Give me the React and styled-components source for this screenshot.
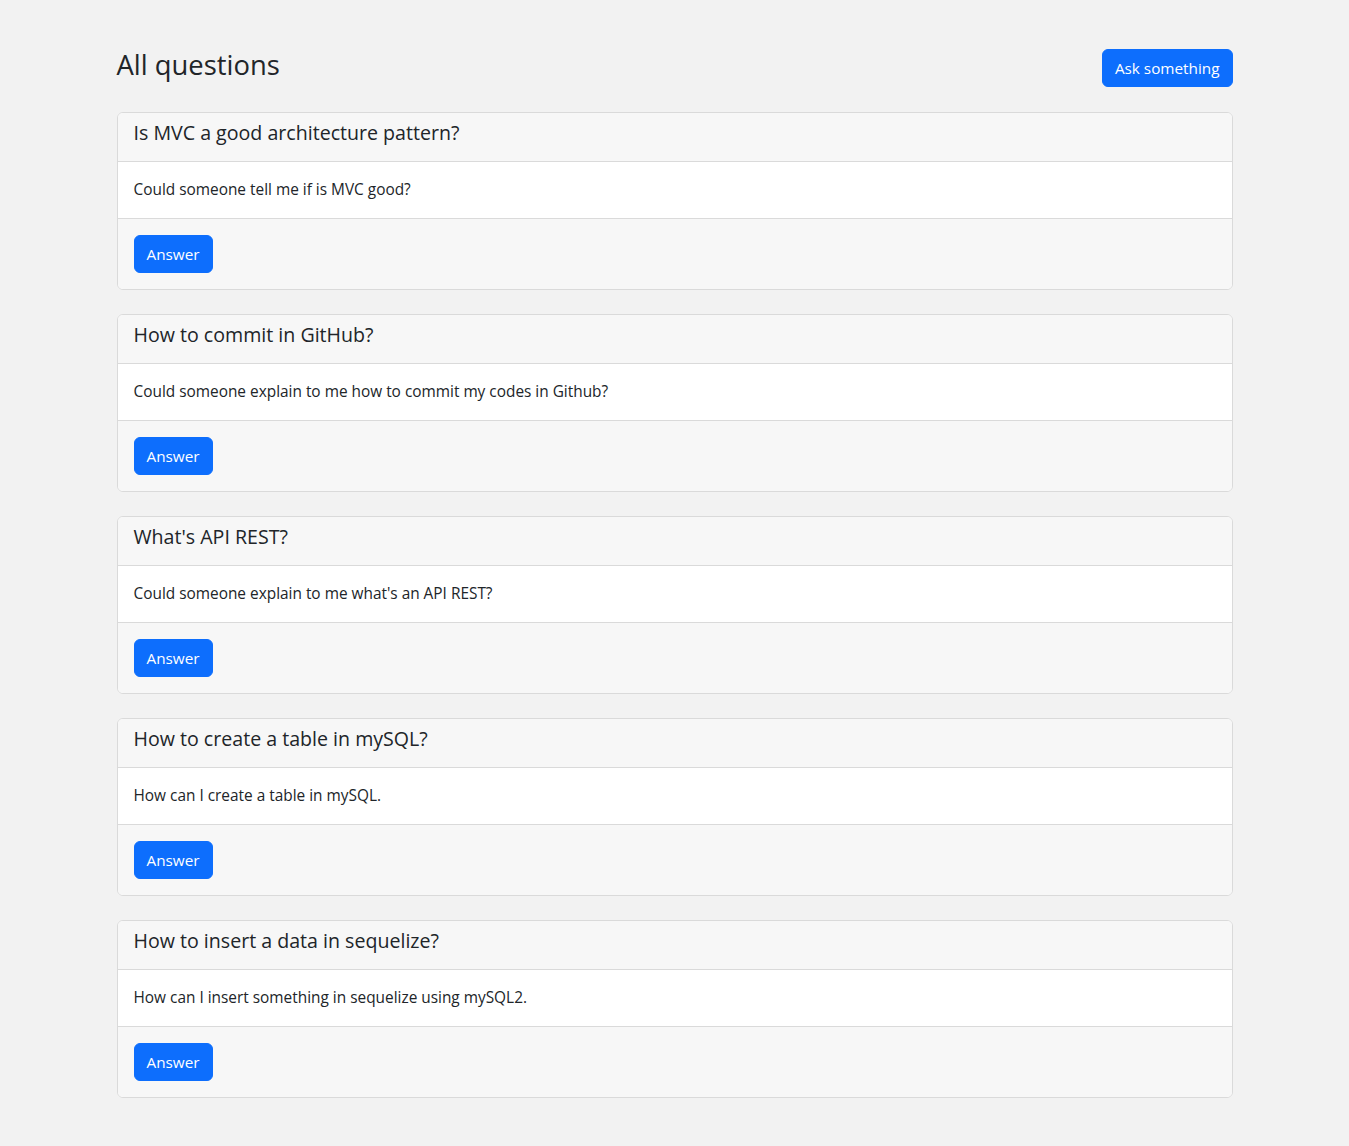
import React from "react";
import styled, { createGlobalStyle } from "styled-components";

const GlobalStyle = createGlobalStyle`
  * { box-sizing: border-box; }
  body {
    margin: 0;
    background: #f2f2f2;
    color: #212529;
    font-family: "Open Sans", "Noto Sans", Arial, sans-serif;
    font-size: 16px;
    line-height: 1.5;
  }
`;

const Container = styled.main`
  max-width: 1140px;
  margin: 0 auto;
  padding: 49px 12px 48px;
`;

const TopBar = styled.header`
  display: flex;
  justify-content: space-between;
  align-items: center;
  margin-bottom: 25px;
`;

const Title = styled.h3`
  margin: 0 0 5px;
  font-size: 27.4px;
  font-weight: 500;
  line-height: 1.2;
`;

const Button = styled.button`
  height: 38px;
  padding: 0 12px;
  border: 1px solid #0d6efd;
  border-radius: 6px;
  background: #0d6efd;
  color: #fff;
  font-family: inherit;
  font-size: 15.3px;
  line-height: 1.5;
  cursor: pointer;
`;

const Card = styled.article`
  background: #fff;
  border: 1px solid #dadada;
  border-radius: 6px;
  margin-bottom: 24px;
  overflow: hidden;
  &:last-child {
    margin-bottom: 0;
  }
`;

const CardHeader = styled.div`
  padding: 8px 16px;
  background: #f7f7f7;
  border-bottom: 1px solid #dadada;
`;

const CardTitle = styled.h5`
  margin: 0 0 8px;
  font-size: 19.6px;
  font-weight: 500;
  line-height: 24px;
`;

const CardBody = styled.div`
  padding: 16px;
`;

const CardText = styled.p`
  margin: 0;
  font-size: 15.4px;
  line-height: 24px;
`;

const CardFooter = styled.div`
  padding: 16px;
  background: #f7f7f7;
  border-top: 1px solid #dadada;
`;

const questions = [
  { title: "Is MVC a good architecture pattern?", text: "Could someone tell me if is MVC good?" },
  { title: "How to commit in GitHub?", text: "Could someone explain to me how to commit my codes in Github?" },
  { title: "What's API REST?", text: "Could someone explain to me what's an API REST?" },
  { title: "How to create a table in mySQL?", text: "How can I create a table in mySQL." },
  { title: "How to insert a data in sequelize?", text: "How can I insert something in sequelize using mySQL2." },
];

const App = () => {
  return (
    <>
      <GlobalStyle />
      <Container>
        <TopBar>
          <Title>All questions</Title>
          <Button>Ask something</Button>
        </TopBar>
        {questions.map((q, index) => (
          <Card key={index}>
            <CardHeader>
              <CardTitle>{q.title}</CardTitle>
            </CardHeader>
            <CardBody>
              <CardText>{q.text}</CardText>
            </CardBody>
            <CardFooter>
              <Button>Answer</Button>
            </CardFooter>
          </Card>
        ))}
      </Container>
    </>
  );
};

export default App;
